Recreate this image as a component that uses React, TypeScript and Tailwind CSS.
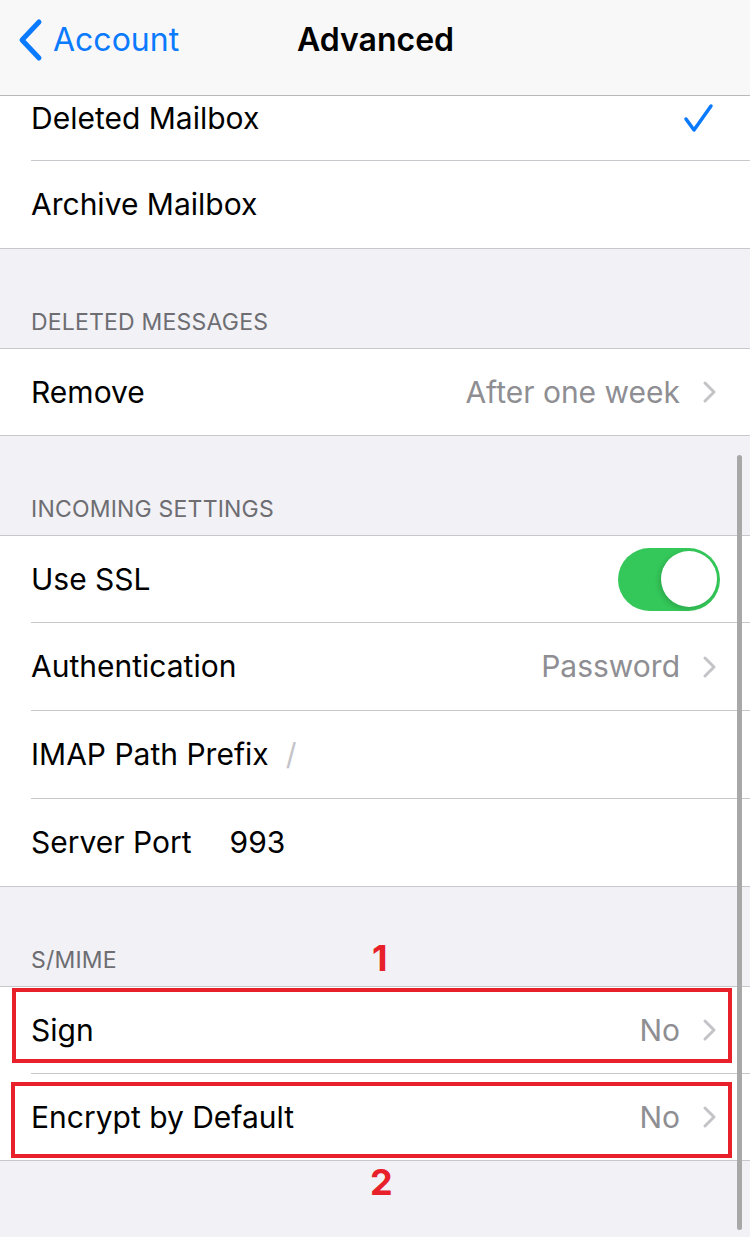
import React from "react";

const font = { fontFamily: "Inter, 'Noto Sans', sans-serif" };

const Chevron = () => (
  <svg width="16" height="24" viewBox="0 0 16 24" className="ml-[22px] mr-[32px]">
    <path d="M3 3 L12 12 L3 21" fill="none" stroke="#c4c4c8" strokeWidth="3" strokeLinecap="round" strokeLinejoin="round" />
  </svg>
);

const Row: React.FC<{ last?: boolean; h: string; children: React.ReactNode }> = ({ last, h, children }) => (
  <div className="pl-[31px]">
    <div className={`flex items-center ${h} ${last ? "" : "border-b border-[#c8c7cc]"}`}>{children}</div>
  </div>
);

const Header: React.FC<{ children: React.ReactNode }> = ({ children }) => (
  <div className="relative flex h-[99px] items-end pb-[9px] pl-[31px] text-[23px] tracking-[0.2px] text-[#6d6d72]">
    {children}
  </div>
);

export default function App() {
  return (
    <div className="relative flex min-h-[1237px] flex-col bg-[#f1f1f6] text-black" style={font}>
      <div className="flex h-[96px] items-center border-b border-[#b9b9bc] bg-[#f8f8f8] pb-[16px]">
        <div className="flex w-[260px] items-center">
          <svg width="30" height="46" viewBox="0 0 30 46" className="ml-[15px] mr-[8px]">
            <path d="M24 5 L7 23 L24 41" fill="none" stroke="#0a7aff" strokeWidth="5" strokeLinecap="round" strokeLinejoin="round" />
          </svg>
          <span className="text-[32px] text-[#0a7aff]">Account</span>
        </div>
        <span className="ml-[37px] text-[32px] font-semibold">Advanced</span>
      </div>

      <div className="border-b border-[#c8c7cc] bg-white">
        <Row h="h-[65px]">
          <span className="flex-1 pb-[19px] text-[30px]">Deleted Mailbox</span>
          <svg width="32" height="32" viewBox="0 0 32 32" className="mb-[18px] mr-[36px]">
            <path d="M4 16 L12 27 L29 3" fill="none" stroke="#0a7aff" strokeWidth="3.5" strokeLinecap="round" strokeLinejoin="round" />
          </svg>
        </Row>
        <Row last h="h-[87px]">
          <span className="text-[30px]">Archive Mailbox</span>
        </Row>
      </div>

      <Header>DELETED MESSAGES</Header>
      <div className="border-y border-[#c8c7cc] bg-white">
        <Row last h="h-[86px]">
          <span className="flex-1 text-[30px]">Remove</span>
          <span className="text-[30px] text-[#8e8e93]">After one week</span>
          <Chevron />
        </Row>
      </div>

      <Header>INCOMING SETTINGS</Header>
      <div className="border-y border-[#c8c7cc] bg-white">
        <Row h="h-[87px]">
          <span className="flex-1 text-[30px]">Use SSL</span>
          <div className="mr-[30px] flex h-[63px] w-[102px] items-center justify-end rounded-full bg-[#34c759] pr-[3px]">
            <div className="h-[56px] w-[56px] rounded-full bg-white shadow-[-2px_2px_5px_rgba(0,0,0,0.15)]" />
          </div>
        </Row>
        <Row h="h-[88px]">
          <span className="flex-1 text-[30px]">Authentication</span>
          <span className="text-[30px] text-[#8e8e93]">Password</span>
          <Chevron />
        </Row>
        <Row h="h-[88px]">
          <span className="text-[30px]">IMAP Path Prefix</span>
          <span className="ml-[17px] text-[30px] text-[#c4c4c8]">/</span>
        </Row>
        <Row last h="h-[87px]">
          <span className="text-[30px]">Server Port</span>
          <span className="ml-[38px] text-[30px]">993</span>
        </Row>
      </div>

      <Header>
        S/MIME
        <span className="absolute left-[372px] top-[44px] text-[36px] font-bold text-[#e8202a]">1</span>
      </Header>
      <div className="relative border-y border-[#c8c7cc] bg-white">
        <Row h="h-[87px]">
          <span className="flex-1 text-[30px]">Sign</span>
          <span className="text-[30px] text-[#8e8e93]">No</span>
          <Chevron />
        </Row>
        <Row last h="h-[86px]">
          <span className="flex-1 text-[30px]">Encrypt by Default</span>
          <span className="text-[30px] text-[#8e8e93]">No</span>
          <Chevron />
        </Row>
        <div className="absolute left-[12px] top-[1px] h-[75px] w-[720px] border-4 border-[#e8202a]" />
        <div className="absolute left-[11px] top-[95px] h-[76px] w-[721px] border-4 border-[#e8202a]" />
        <span className="absolute left-[370px] top-[168px] text-[36px] font-bold text-[#e8202a]">2</span>
      </div>

      <div className="flex-1" />
      <div className="absolute left-[737px] top-[455px] h-[775px] w-[5px] rounded-full bg-[#a8a8a8]" />
    </div>
  );
}
